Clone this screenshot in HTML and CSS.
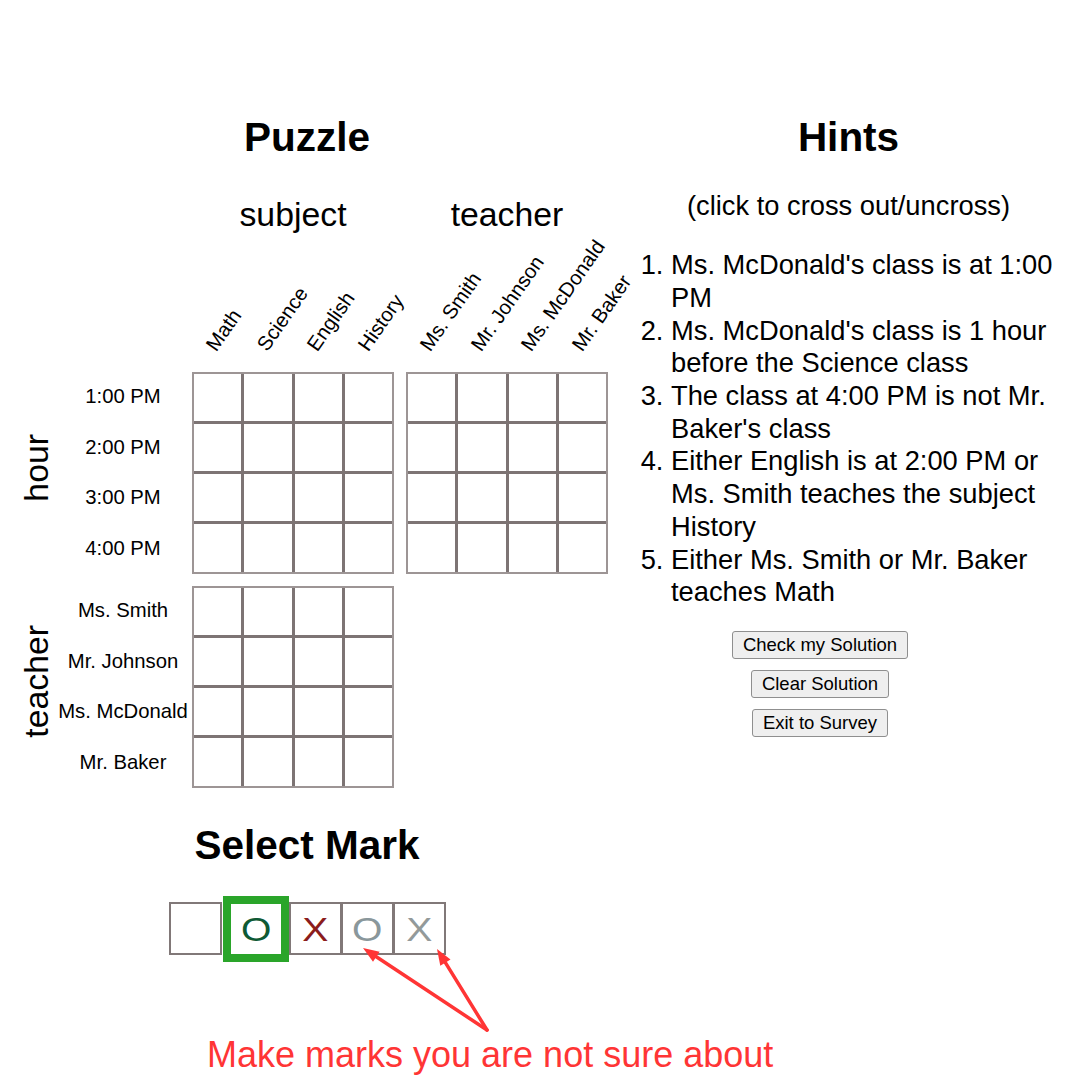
FILE: index.html
```html
<!DOCTYPE html>
<html lang="en">
<head>
<meta charset="utf-8">
<title>Puzzle</title>
<link rel="stylesheet" href="styles.css">
</head>
<body>
<div class="page">
  <div class="left">
    <h1 class="title">Puzzle</h1>
    <div class="puzzle">
      <div class="cat cat-subject">subject</div>
      <div class="cat cat-teacher">teacher</div>
      <div class="heads heads-subject">
        <div class="head"><span>Math</span></div>
        <div class="head"><span>Science</span></div>
        <div class="head"><span>English</span></div>
        <div class="head"><span>History</span></div>
      </div>
      <div class="heads heads-teacher">
        <div class="head"><span>Ms. Smith</span></div>
        <div class="head"><span>Mr. Johnson</span></div>
        <div class="head"><span>Ms. McDonald</span></div>
        <div class="head"><span>Mr. Baker</span></div>
      </div>
      <div class="side side-hour"><span>hour</span></div>
      <div class="rowlabels rows-hour">
        <div>1:00 PM</div><div>2:00 PM</div><div>3:00 PM</div><div>4:00 PM</div>
      </div>
      <div class="block b1">
        <div></div><div></div><div></div><div></div>
        <div></div><div></div><div></div><div></div>
        <div></div><div></div><div></div><div></div>
        <div></div><div></div><div></div><div></div>
      </div>
      <div class="block b2">
        <div></div><div></div><div></div><div></div>
        <div></div><div></div><div></div><div></div>
        <div></div><div></div><div></div><div></div>
        <div></div><div></div><div></div><div></div>
      </div>
      <div class="side side-teacher"><span>teacher</span></div>
      <div class="rowlabels rows-teacher">
        <div>Ms. Smith</div><div>Mr. Johnson</div><div>Ms. McDonald</div><div>Mr. Baker</div>
      </div>
      <div class="block b3">
        <div></div><div></div><div></div><div></div>
        <div></div><div></div><div></div><div></div>
        <div></div><div></div><div></div><div></div>
        <div></div><div></div><div></div><div></div>
      </div>
    </div>
    <h1 class="title select-title">Select Mark</h1>
    <div class="marks">
      <div class="mark mark-blank"></div>
      <div class="mark mark-selected"><span class="glyph g-o">O</span></div>
      <div class="mark mark-x"><span class="glyph g-x">X</span></div>
      <div class="mark mark-o2"><span class="glyph g-o2">O</span></div>
      <div class="mark mark-x2"><span class="glyph g-x2">X</span></div>
    </div>
  </div>
  <div class="right">
    <h1 class="title">Hints</h1>
    <p class="hint-note">(click to cross out/uncross)</p>
    <ol class="hints">
      <li>Ms. McDonald's class is at 1:00 PM</li>
      <li>Ms. McDonald's class is 1 hour before the Science class</li>
      <li>The class at 4:00 PM is not Mr. Baker's class</li>
      <li>Either English is at 2:00 PM or Ms. Smith teaches the subject History</li>
      <li>Either Ms. Smith or Mr. Baker teaches Math</li>
    </ol>
    <div class="buttons">
      <button class="btn">Check my Solution</button>
      <button class="btn">Clear Solution</button>
      <button class="btn">Exit to Survey</button>
    </div>
  </div>
</div>
<div class="annotation">
  <svg class="arrows" width="1080" height="1080" viewBox="0 0 1080 1080">
    <g stroke="#ff3535" stroke-width="3.5" stroke-linecap="round" fill="none">
      <line x1="487" y1="1030" x2="376.3" y2="956.8"/>
      <line x1="487" y1="1030" x2="445.4" y2="962.6"/>
    </g>
    <g fill="#ff3535">
      <polygon points="363,948 379.6,951.8 373,961.8"/>
      <polygon points="437,949 450.5,959.5 440.3,965.7"/>
    </g>
  </svg>
  <div class="note">Make marks you are not sure about</div>
</div>
</body>
</html>
```

FILE: styles.css
```css
* { box-sizing: border-box; }

html, body {
  margin: 0;
  padding: 0;
}

body {
  width: 1080px;
  height: 1080px;
  background: #ffffff;
  color: #000000;
  font-family: "Liberation Sans", Arial, sans-serif;
  position: relative;
  overflow: hidden;
}

.page {
  display: flex;
  padding-top: 114px;
}

.left {
  width: 614px;
  display: flex;
  flex-direction: column;
}

.right {
  width: 466px;
  padding-left: 3px;
  display: flex;
  flex-direction: column;
}

.title {
  margin: 0;
  font-size: 40.5px;
  font-weight: bold;
  line-height: 46.6px;
  text-align: center;
}

/* puzzle grid */
.puzzle {
  display: grid;
  grid-template-columns: 56px 134px 2px 202px 12px 202px;
  grid-template-rows: 39px 138px 202px 12px 202px;
  margin-top: 34px;
}

.cat {
  font-size: 33.8px;
  line-height: 39px;
  text-align: center;
  white-space: nowrap;
}
.cat-subject { grid-row: 1; grid-column: 4; }
.cat-teacher { grid-row: 1; grid-column: 6; }

.heads {
  display: grid;
  grid-template-columns: repeat(4, 1fr);
}
.heads-subject { grid-row: 2; grid-column: 4; }
.heads-teacher { grid-row: 2; grid-column: 6; }

.head { position: relative; }
.head span {
  position: absolute;
  left: 27px;
  bottom: 17px;
  font-size: 20.3px;
  line-height: 1;
  white-space: nowrap;
  transform-origin: 0 100%;
  transform: rotate(-55deg);
}

.side {
  display: flex;
  justify-content: flex-end;
  align-items: center;
  padding-bottom: 10px;
}
.side span {
  writing-mode: vertical-rl;
  transform: rotate(180deg);
  font-size: 33.8px;
  line-height: 38.9px;
  white-space: nowrap;
}
.side-hour { grid-row: 3; grid-column: 1; }
.side-teacher { grid-row: 5; grid-column: 1; }

.rowlabels {
  display: grid;
  grid-template-rows: repeat(4, 1fr);
}
.rowlabels div {
  display: flex;
  align-items: center;
  justify-content: center;
  font-size: 20.3px;
  white-space: nowrap;
}
.rows-hour { grid-row: 3; grid-column: 2; }
.rows-teacher { grid-row: 5; grid-column: 2; }

.block {
  display: grid;
  grid-template-columns: repeat(4, 1fr);
  grid-template-rows: repeat(4, 1fr);
  gap: 3px;
  border: 2px solid #9d9595;
  background: #7d7474;
}
.block div { background: #ffffff; }
.b1 { grid-row: 3; grid-column: 4; }
.b2 { grid-row: 3; grid-column: 6; }
.b3 { grid-row: 5; grid-column: 4; }

/* select mark */
.select-title { margin-top: 34.5px; }

.marks {
  display: flex;
  justify-content: center;
  align-items: center;
  margin-top: 27px;
  padding-left: 1px;
}

.mark {
  width: 53px;
  height: 53px;
  border: 2px solid #817878;
  display: flex;
  align-items: center;
  justify-content: center;
  background: #ffffff;
}
.mark-selected {
  width: 66px;
  height: 66px;
  border: 8px solid #2aa52a;
  margin-left: 1px;
}
.mark-o2, .mark-x2 { margin-left: -1px; }

.glyph {
  display: inline-block;
  font-size: 34px;
  line-height: 1;
  transform: scaleX(1.15);
}
.g-o { color: #0f5a34; }
.g-x { color: #8b1c1c; }
.g-o2 { color: #8a979b; }
.g-x2 { color: #939a9a; }

/* hints */
.hint-note {
  margin: 29px 0 0;
  font-size: 27.3px;
  line-height: 31.4px;
  text-align: center;
}

.hints {
  margin: 28.2px 0 0;
  padding-left: 54px;
  font-size: 27.3px;
  line-height: 32.7px;
}

.buttons {
  display: flex;
  flex-direction: column;
  align-items: center;
  gap: 11px;
  margin-top: 22px;
  margin-right: 57px;
}

.btn {
  height: 28px;
  padding: 0 9.5px;
  font-family: "Liberation Sans", Arial, sans-serif;
  font-size: 18.5px;
  line-height: 1;
  color: #000000;
  background: #efefef;
  border: 1px solid #8f8f8f;
  border-radius: 3px;
}

/* annotation overlay */
.annotation {
  position: absolute;
  left: 0;
  top: 0;
  width: 1080px;
  height: 1080px;
  pointer-events: none;
}
.arrows {
  position: absolute;
  left: 0;
  top: 0;
}
.note {
  position: absolute;
  left: 207px;
  top: 1037px;
  font-size: 36px;
  line-height: 1;
  color: #ff3535;
  white-space: nowrap;
}
```
